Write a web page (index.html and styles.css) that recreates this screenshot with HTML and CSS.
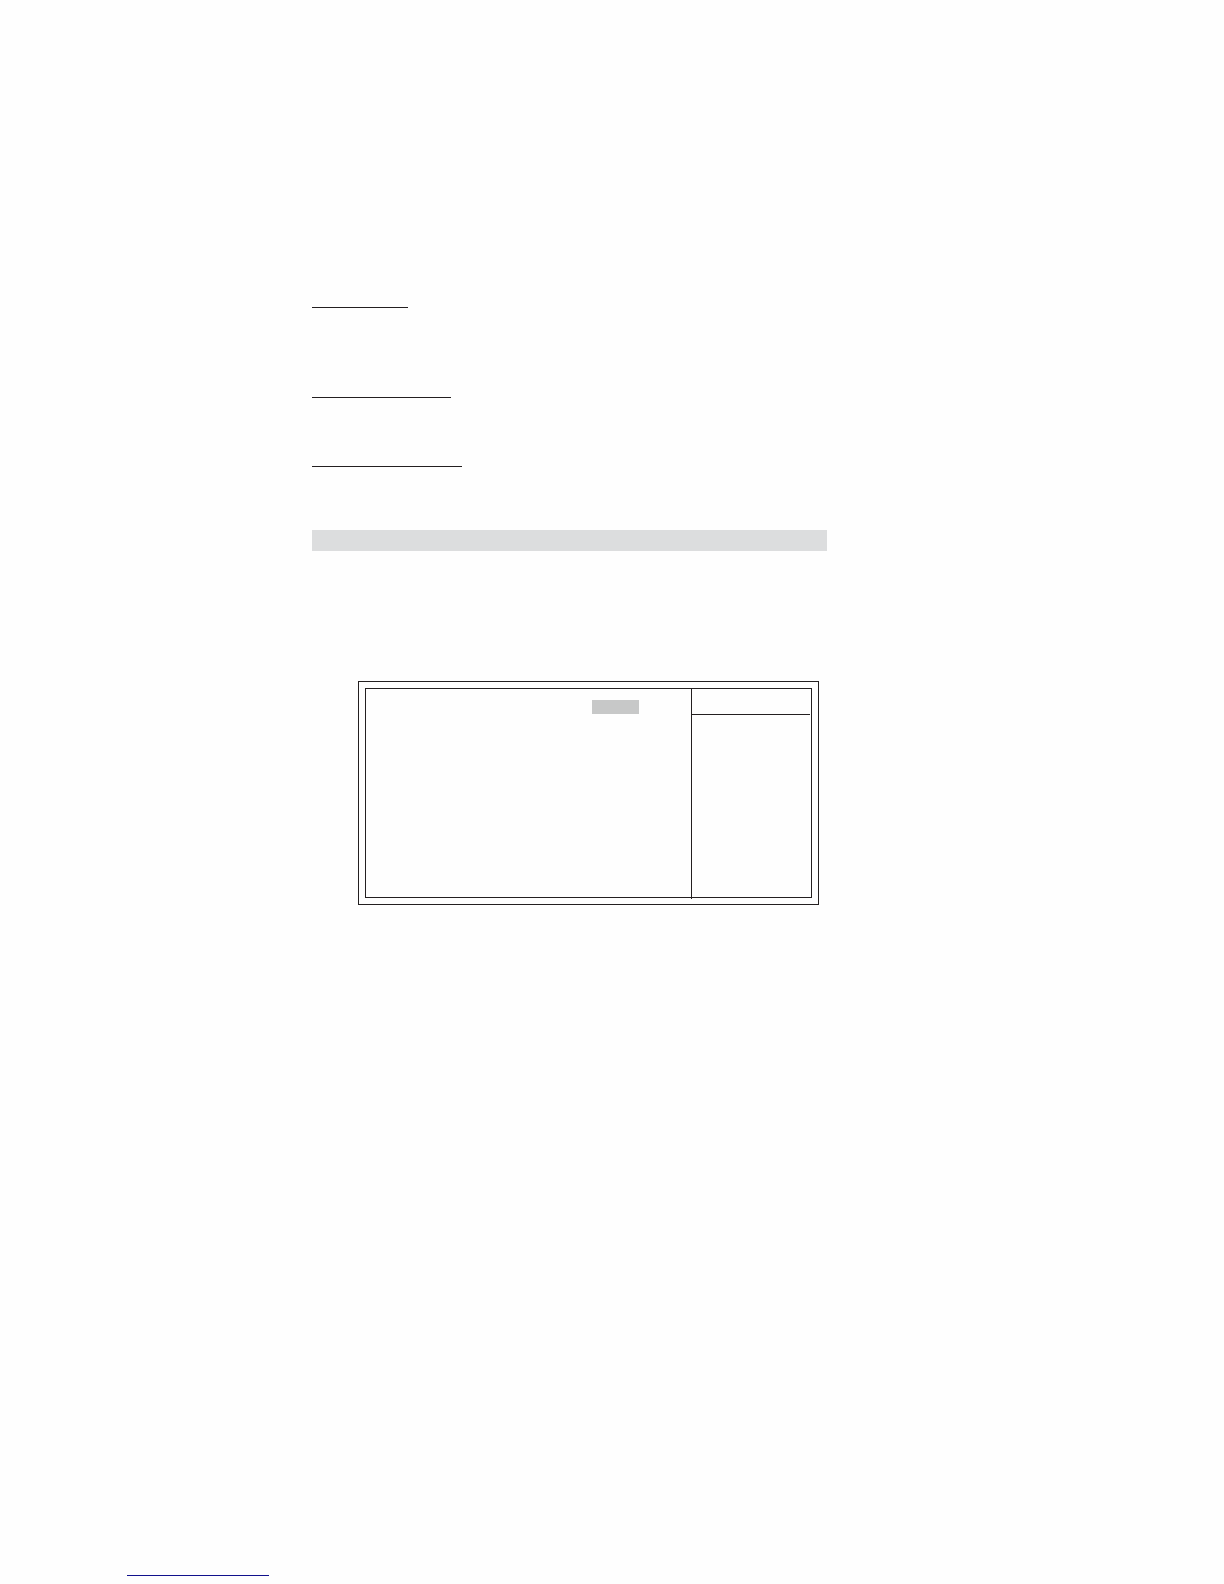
FILE: index.html
```html
<!DOCTYPE html>
<html lang="en">
<head>
<meta charset="utf-8">
<meta name="viewport" content="width=device-width, initial-scale=1">
<title>Setup</title>
<link rel="stylesheet" href="styles.css">
</head>
<body>
<main class="content">
  <div class="rules">
    <hr class="rule rule-short">
    <hr class="rule rule-medium">
    <hr class="rule rule-long">
  </div>
  <div class="band"></div>
  <section class="panel">
    <div class="screen">
      <div class="options">
        <div class="selection"></div>
      </div>
      <aside class="help">
        <div class="help-head"></div>
      </aside>
    </div>
  </section>
</main>
<footer class="footer">
  <hr class="footer-rule">
</footer>
</body>
</html>
```

FILE: styles.css
```css
* {
  box-sizing: border-box;
}

body {
  display: flex;
  flex-direction: column;
  min-height: 100vh;
  margin: 0;
  background: #fefefe;
  color: #231f20;
  font-family: "Liberation Sans", Arial, sans-serif;
}

hr {
  height: 1px;
  margin: 0;
  border: 0;
}

.content {
  width: 100%;
  max-width: 827px;
  padding: 307px 0 48px 312px;
}

.rule {
  background: #231f20;
}

.rule-short {
  width: 96px;
  margin-bottom: 89px;
}

.rule-medium {
  width: 139px;
  margin-bottom: 68px;
}

.rule-long {
  width: 150px;
  margin-bottom: 63px;
}

.band {
  height: 21px;
  background: #dcddde;
}

.panel {
  margin: 130px 8px 0 46px;
  padding: 6px;
  border: 1px solid #231f20;
}

.screen {
  display: grid;
  grid-template-columns: 1fr 120px;
  min-height: 210px;
  border: 1px solid #231f20;
}

.options {
  padding: 11px 52px;
}

.selection {
  width: 47px;
  height: 14px;
  margin-left: auto;
  background: #c7c8c8;
}

/* The divider runs through the bottom frame line. */
.help {
  margin-bottom: -2px;
  border-left: 1px solid #231f20;
}

.help-head {
  height: 26px;
  margin-right: 1px;
  border-bottom: 1px solid #231f20;
}

.footer {
  margin-top: auto;
  padding: 0 127px 8px;
}

.footer-rule {
  width: 142px;
  background: #11118c;
}
```
